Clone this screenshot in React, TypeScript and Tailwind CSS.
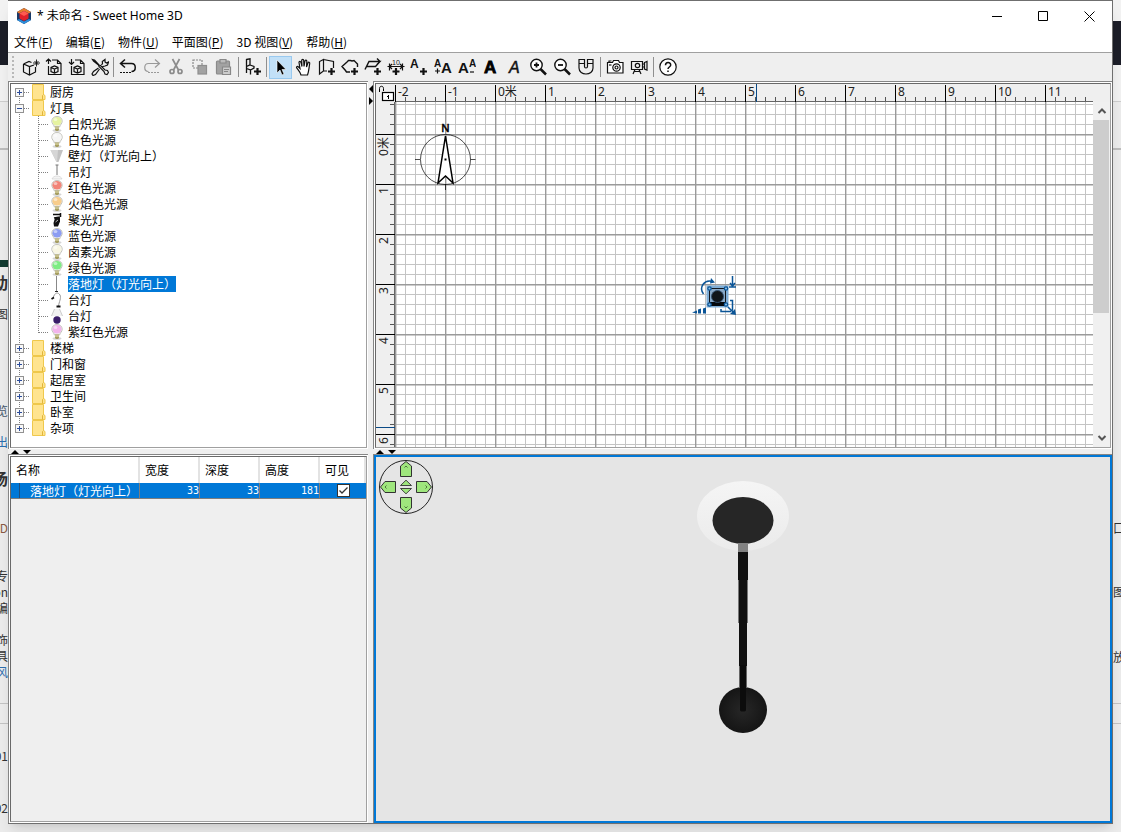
import { useState } from "react";
import type { ReactNode } from "react";
import clsx from "clsx";

const menus = [
  { label: "文件", mnemonic: "F" },
  { label: "编辑", mnemonic: "E" },
  { label: "物件", mnemonic: "U" },
  { label: "平面图", mnemonic: "P" },
  { label: "3D 视图", mnemonic: "V" },
  { label: "帮助", mnemonic: "H" },
];

const lights = [
  { name: "白炽光源", icon: <Bulb color="#e6f3a0" /> },
  { name: "白色光源", icon: <Bulb color="#f6f6f6" /> },
  { name: "壁灯（灯光向上）", icon: <WallLamp /> },
  { name: "吊灯", icon: <PendantLamp /> },
  { name: "红色光源", icon: <Bulb color="#f28478" /> },
  { name: "火焰色光源", icon: <Bulb color="#f8cd8c" /> },
  { name: "聚光灯", icon: <SpotLamp /> },
  { name: "蓝色光源", icon: <Bulb color="#8c9cf2" /> },
  { name: "卤素光源", icon: <Bulb color="#f8f6e2" /> },
  { name: "绿色光源", icon: <Bulb color="#7eec84" /> },
  { name: "落地灯（灯光向上）", icon: <FloorLamp /> },
  { name: "台灯", icon: <DeskLamp /> },
  { name: "台灯", icon: <TableLamp /> },
  { name: "紫红色光源", icon: <Bulb color="#f2b4ec" /> },
];

const categories = [
  { name: "厨房", children: [] },
  { name: "灯具", children: lights },
  { name: "楼梯", children: [] },
  { name: "门和窗", children: [] },
  { name: "起居室", children: [] },
  { name: "卫生间", children: [] },
  { name: "卧室", children: [] },
  { name: "杂项", children: [] },
];

function Bulb({ color }: { color: string }) {
  return (
    <svg viewBox="0 0 14 16" className="h-4 w-[14px]">
      <ellipse cx="7" cy="14.500" rx="4.500" ry="1.300" fill="#d4d4d4" />
      <path d="M7 .5C3.800.5 1.800 2.600 1.800 5.200c0 2.400 2 3.300 2.600 5.800h5.200c.6-2.500 2.600-3.400 2.600-5.800C12.200 2.600 10.200.5 7 .5z" fill="#f3f3f0" stroke="#b4b4ac" strokeWidth=".8" />
      <ellipse cx="7" cy="5.200" rx="4.600" ry="4.200" fill={color} />
      <ellipse cx="5.500" cy="3.500" rx="1.900" ry="1.500" fill="#fff" opacity=".5" />
      <path d="M5 10.500h4v3.500l-1 1H6l-1-1z" fill="#a59d60" />
      <path d="M5 12h4" stroke="#f2edc4" strokeWidth=".9" />
    </svg>
  );
}

function WallLamp() {
  return (
    <svg viewBox="0 0 14 16" className="h-4 w-[14px]">
      <path d="M.5 2h12.500L8.500 14h-2z" fill="#c2c2c2" />
      <path d="M.5 2H8l-1 12h-.5z" fill="#d6d6d6" />
    </svg>
  );
}

function PendantLamp() {
  return (
    <svg viewBox="0 0 14 16" className="h-4 w-[14px]">
      <path d="M5.500 1h3M7 1v10" stroke="#777" fill="none" />
      <path d="M2 15c1-4 9-4 10 0z" fill="#f4f4f4" stroke="#ccc" strokeWidth=".6" />
    </svg>
  );
}

function SpotLamp() {
  return (
    <svg viewBox="0 0 14 16" className="h-4 w-[14px]">
      <path d="M3 2.500h8M10.500 1v4M4 6l6-1" stroke="#111" strokeWidth="1.500" fill="none" />
      <path d="M5 6l5-.5v4L8 14.500H4L3.500 11z" fill="#111" />
      <path d="M5.500 10l2.500-2" stroke="#bbb" />
    </svg>
  );
}

function FloorLamp() {
  return (
    <svg viewBox="0 0 14 16" className="h-4 w-[14px]">
      <path d="M6.500 0v15" stroke="#888" />
      <path d="M5 15.500h3" stroke="#222" />
    </svg>
  );
}

function DeskLamp() {
  return (
    <svg viewBox="0 0 14 16" className="h-4 w-[14px]">
      <path d="M3 6C5 0 8 0 10 3c1.500 3-1 7-1.500 11" stroke="#999" fill="none" />
      <path d="M1.500 7l2.500-1.500M6.500 14.500h4" stroke="#111" strokeWidth="1.800" />
    </svg>
  );
}

function TableLamp() {
  return (
    <svg viewBox="0 0 14 16" className="h-4 w-[14px]">
      <path d="M4.500 1h5l3 7h-11z" fill="#f1f1f1" />
      <path d="M4.500 1l-3 7M9.500 1l3 7" stroke="#ccc" />
      <circle cx="7" cy="12" r="3.700" fill="#3a1d69" />
    </svg>
  );
}

function FolderIcon() {
  return (
    <svg viewBox="0 0 14 16" className="h-4 w-[14px]">
      <path d="M.5.5h11v10l1.500 1v4H.5z" fill="#ffe48f" stroke="#efc84c" />
      <path d="M10.500 15.500v-4l1-1" fill="none" stroke="#e0b53a" />
    </svg>
  );
}

// Guide lines drawn in front of a top level row, with the expand box
function BranchGuide({ open, first, last }: { open: boolean; first: boolean; last: boolean }) {
  return (
    <svg viewBox="0 0 21 16" className="h-4 w-[21px] shrink-0" shapeRendering="crispEdges">
      <path d={first ? "M8.500 8v8" : last ? "M8.500 0v8" : "M8.500 0v16"} stroke="#808080" strokeDasharray="1 1" />
      <path d="M13 8.500h5" stroke="#808080" strokeDasharray="1 1" />
      <rect x="4.500" y="4.500" width="8" height="8" fill="#f8f8f8" stroke="#919191" />
      <path d={open ? "M6 8.500h5" : "M6 8.500h5M8.500 6v5"} stroke="#2b4c9b" />
    </svg>
  );
}

function LeafGuide({ last }: { last: boolean }) {
  return (
    <svg viewBox="0 0 39 16" className="h-4 w-[39px] shrink-0" shapeRendering="crispEdges">
      <path d="M8.500 0v16" stroke="#808080" strokeDasharray="1 1" />
      <path d={last ? "M27.500 0v9" : "M27.500 0v16"} stroke="#808080" strokeDasharray="1 1" />
      <path d="M28 8.500h10" stroke="#808080" strokeDasharray="1 1" />
    </svg>
  );
}

function CatalogTree() {
  const [selected, setSelected] = useState(10);
  return (
    <ul className="flex-1 bg-white">
      {categories.map((category, index) => (
        <li key={category.name}>
          <div className="flex h-4 items-center">
            <BranchGuide
              open={category.children.length > 0}
              first={index === 0}
              last={index === categories.length - 1}
            />
            <FolderIcon />
            <span className="ml-1 leading-4">{category.name}</span>
          </div>
          {category.children.length > 0 && (
            <ul>
              {category.children.map((item, i) => (
                <li key={i} className="flex h-4 items-center">
                  <LeafGuide last={i === category.children.length - 1} />
                  {item.icon}
                  <button
                    type="button"
                    onClick={() => setSelected(i)}
                    className={clsx(
                      "ml-1 h-4 whitespace-nowrap leading-4",
                      selected === i && "bg-[#0078d7] text-white"
                    )}
                  >
                    {item.name}
                  </button>
                </li>
              ))}
            </ul>
          )}
        </li>
      ))}
    </ul>
  );
}

function FurnitureTable() {
  const [visible, setVisible] = useState(true);
  const head = "border-r-2 border-[#e3e3e3] pl-[5px] text-left font-normal";
  const cell = "border-r border-b border-[#7d7d7d] text-right font-[DejaVu_Sans_Mono,monospace] text-[10px]";
  return (
    <table className="w-full table-fixed border-separate border-spacing-0">
      <colgroup>
        <col className="w-[129px]" />
        <col className="w-[60px]" />
        <col className="w-[60px]" />
        <col className="w-[60px]" />
        <col />
      </colgroup>
      <thead>
        <tr className="h-[26px] bg-white">
          <th className={head}>名称</th>
          <th className={head}>宽度</th>
          <th className={head}>深度</th>
          <th className={head}>高度</th>
          <th className={head}>可见</th>
        </tr>
      </thead>
      <tbody>
        <tr className="h-4 bg-[#0078d7] leading-[15px] text-white">
          <td className="border-r border-b border-[#7d7d7d] p-0">
            <div className="ml-2 h-[15px] border-l border-[#1c4f80] pl-[10px] whitespace-nowrap">落地灯（灯光向上）</div>
          </td>
          <td className={cell}>33</td>
          <td className={cell}>33</td>
          <td className={cell}>181</td>
          <td className="border-b border-[#7d7d7d] p-0">
            <label className="relative mx-auto block size-[13px]">
              <input
                type="checkbox"
                aria-label="可见"
                checked={visible}
                onChange={() => setVisible(!visible)}
                className="block size-[13px] appearance-none border border-[#333] bg-white"
              />
              {visible && (
                <svg viewBox="0 0 13 13" className="pointer-events-none absolute inset-0">
                  <path d="M2.500 6.500l2.500 2.500 5.500-5.500" fill="none" stroke="#333" strokeWidth="1.300" />
                </svg>
              )}
            </label>
          </td>
        </tr>
      </tbody>
    </table>
  );
}

function Icon({ children }: { children: ReactNode }) {
  return (
    <svg viewBox="0 0 18 18" className="size-[18px]" fill="none" stroke="#111" strokeWidth="1.200">
      {children}
    </svg>
  );
}

const plus = <path d="M10 13.500h7M13.500 10v7" strokeWidth="2.200" />;
const letter = "Liberation Sans, Arial, sans-serif";

const tools: { width: "narrow" | "wide"; sep?: boolean; label: string; icon: ReactNode }[] = [
  {
    width: "narrow", label: "新建",
    icon: <><path d="M1.500 6l6 2.500L12 7M1.500 6v8l6 3 6-3V9M7.500 8.500V17M1.500 6L7 3.500l2.500 1" /><path d="M11 5h7M14.500 1.500v7M12.500 3l4 4M16.500 3l-4 4" strokeWidth=".9" /></>,
  },
  {
    width: "narrow", label: "打开",
    icon: <path d="M7 2h5.500L16 5.500v11H3.500V8M12.500 2v3.500H16M1 3.500L3.500 1 6 3.500M3.500 1v5M6 9.500L9.500 11 13 9.500M6 9.500v4L9.500 15l3.500-1.500v-4L9.500 8zM9.500 11v4" />,
  },
  {
    width: "narrow", label: "保存",
    icon: <path d="M7 2h5.500L16 5.500v11H3.500V8M12.500 2v3.500H16M1 4l2.500 2.500L6 4M3.500 1v5M6 9.500L9.500 11 13 9.500M6 9.500v4L9.500 15l3.500-1.500v-4L9.500 8zM9.500 11v4" />,
  },
  {
    width: "narrow", label: "偏好设置",
    icon: <path d="M1.500 1.500l2 .5 4.500 5 1.500.5 4.500 4.500 2.500.5 1 2-1.500 2-2-.5-1-2.500-5-5-.5-1.500-5-4zM10.500 7l1-1.500-.2-2L14 1.500v2.500l1.500 1 2-1-1 3-2.500 1-2 .5-1 .5M7.500 10L2.500 13.500 1 16l1 1.500 2.500-1L8.500 11" />,
  },
  {
    width: "wide", sep: true, label: "撤消",
    icon: <><path d="M6 1.500l-4.500 4L6 9.500M1.500 5.500h11c5 0 5 8 0 8" strokeWidth="1.500" /><path d="M1 14.500h12" strokeDasharray="2 1" /></>,
  },
  {
    width: "wide", label: "重做",
    icon: <g stroke="#999"><path d="M12 1.500l4.500 4-4.500 4M16.500 5.500h-11c-5 0-5 8 0 8" /><path d="M5 14.500h12" strokeDasharray="2 1" /></g>,
  },
  {
    width: "wide", label: "剪切",
    icon: <g stroke="#8c8c8c" strokeWidth="1.700"><path d="M5.500 1l6 11M12.500 1l-6 11" /><circle cx="5" cy="13.500" r="2" /><circle cx="13" cy="13.500" r="2" /></g>,
  },
  {
    width: "wide", label: "复制",
    icon: <><rect x="2" y="2" width="9" height="8" stroke="#888" strokeDasharray="2 1" /><rect x="7" y="7.500" width="8.500" height="8.500" fill="#a2a2a2" stroke="#8e8e8e" /></>,
  },
  {
    width: "wide", label: "粘贴",
    icon: <><rect x="1.500" y="3" width="13" height="13" rx="1" fill="#a2a2a2" stroke="#8a8a8a" /><path d="M5 1.500h6v3.500H5z" fill="#bbb" stroke="#888" /><path d="M7.500 9h8v7.500h-8zM9 11.500h5M9 13.500h4" fill="#ccc" stroke="#888" /></>,
  },
  {
    width: "narrow", sep: true, label: "添加家具",
    icon: <><path d="M2.500 1.500L6 .8v6L2.500 8.500zM2.500 8.500V15M2.500 10.500L6.500 12v4.500M6.500 12L10 10V8.500L6 7" strokeWidth="1.300" />{plus}</>,
  },
  {
    width: "narrow", sep: true, label: "选择",
    icon: <path d="M5 2v13l3-3 2 5 2-1-2-4.500h4z" fill="#000" stroke="#fff" strokeWidth=".6" />,
  },
  {
    width: "narrow", label: "平移",
    icon: <path d="M6 17C5 13.500 2.500 11.500 1.500 9.500c0-1 1-1.500 2-.5L5 10.500 4 4.500c0-1.500 1.500-1.500 2 0l1 4-.3-6c0-1.500 2-1.500 2 0l.3 6 1-5.500c.3-1.500 2-1 1.800.5L11.500 9l1.500-4c.5-1.300 2-.8 1.700.7C14 9 14 13 12.500 17z" fill="#fff" />,
  },
  {
    width: "narrow", label: "创建墙",
    icon: <><path d="M1.500 16V3.500l4-2V13zM5.500 1.500l10 2V10M5.500 13H9" />{plus}</>,
  },
  {
    width: "narrow", label: "创建房间",
    icon: <><path d="M9 14H5.500l-1-1.500L1 8.500 6 4l1.500-1.500h2L11 3l2-.5L16.500 6v3" strokeWidth="1.400" />{plus}</>,
  },
  {
    width: "narrow", label: "创建多段线",
    icon: <><path d="M1 11.500L5 3.500h11L11.500 8.500H2.500M13 .5l3 3-3 3" strokeWidth="1.400" />{plus}</>,
  },
  {
    width: "narrow", label: "创建尺寸",
    icon: <><path d="M2.500 5.500v7M15.500 5.500v7M.5 8.500h17M5 6L2.500 8.500 5 11M13 6l2.500 2.500L13 11" /><text x="5" y="6.500" fontSize="7" fontFamily={letter} fill="#111" stroke="none">10</text><path d="M5.500 13.500h7M9 10v7" strokeWidth="2.200" /></>,
  },
  {
    width: "wide", label: "添加文字",
    icon: <><text x="0" y="10" fontSize="12" fontWeight="bold" fontFamily={letter} fill="#111" stroke="none">A</text>{plus}</>,
  },
  {
    width: "wide", label: "增大字号",
    icon: <><text x="0" y="9" fontSize="10" fontWeight="bold" fontFamily={letter} fill="#111" stroke="none">A</text><text x="7" y="15" fontSize="15" fontWeight="bold" fontFamily={letter} fill="#111" stroke="none">A</text><path d="M1 13h5M3.500 10.500v5" /></>,
  },
  {
    width: "wide", label: "减小字号",
    icon: <><text x="0" y="15" fontSize="15" fontWeight="bold" fontFamily={letter} fill="#111" stroke="none">A</text><text x="11" y="9" fontSize="10" fontWeight="bold" fontFamily={letter} fill="#111" stroke="none">A</text><path d="M12 14h4" /></>,
  },
  {
    width: "wide", label: "粗体",
    icon: <text x="2" y="15" fontSize="17" fontWeight="bold" fontFamily={letter} fill="#000" stroke="#000" strokeWidth=".8">A</text>,
  },
  {
    width: "narrow", label: "斜体",
    icon: <text x="3" y="15" fontSize="16" fontStyle="italic" fontFamily={letter} fill="#111" stroke="#111" strokeWidth=".5">A</text>,
  },
  {
    width: "wide", label: "放大",
    icon: <><circle cx="7.500" cy="7" r="5.700" fill="#fff" strokeWidth="1.400" /><path d="M5 7h5M7.500 4.500v5" strokeWidth="1.800" /><path d="M11.500 11l5.500 5.500" strokeWidth="2.500" /></>,
  },
  {
    width: "wide", label: "缩小",
    icon: <><circle cx="7.500" cy="7" r="5.700" fill="#fff" strokeWidth="1.400" /><path d="M5 7h5" strokeWidth="1.800" /><path d="M11.500 11l5.500 5.500" strokeWidth="2.500" /></>,
  },
  {
    width: "wide", label: "磁性",
    icon: <path d="M2 1.500h5.500v7c0 2 3 2 3 0v-7H16v8.500c0 8-14 8-14 0zM2 5.500h5.500M10.500 5.500H16" />,
  },
  {
    width: "wide", sep: true, label: "拍照",
    icon: <><path d="M1.500 4.500h5l1-2h5l1 2h3.500v10.500H1.500zM3 4V3h2.500" fill="#fff" /><circle cx="10.500" cy="9.500" r="3.700" /><circle cx="10.500" cy="9.500" r="1.500" /><path d="M3 7h2.500" /></>,
  },
  {
    width: "wide", label: "录像",
    icon: <><path d="M1.500 3.500h11v8h-11zM12.500 6h2v3h-2M14.500 4.500L17 3.500v8.500l-2.500-1zM5 11.500L3 16M9 11.500l2 4.500M4 13.500h6" /><circle cx="7.500" cy="7.500" r="2.200" /></>,
  },
  {
    width: "wide", sep: true, label: "帮助",
    icon: <><circle cx="9" cy="9" r="8.200" fill="#fff" /><path d="M6.500 7.200c0-3.500 5.200-3.500 5.200-.2 0 2-2.700 2-2.700 4M9 12.500V14" strokeWidth="1.500" /></>,
  },
];

function Toolbar() {
  const [active, setActive] = useState("选择");
  return (
    <div role="toolbar" className="flex h-7 items-center bg-[#efefef] pl-[3px]">
      <svg viewBox="0 0 8 24" className="h-6 w-2" shapeRendering="crispEdges">
        <path d="M2 1v22" stroke="#b8b8b8" strokeWidth="2" strokeDasharray="2 2" />
      </svg>
      {tools.map((tool) => (
        <div key={tool.label} className="flex items-center">
          {tool.sep && <span className="mx-[2px] h-5 w-px bg-[#8f8f8f]" />}
          <button
            type="button"
            title={tool.label}
            aria-pressed={active === tool.label}
            onClick={() => setActive(tool.label)}
            className={clsx(
              "flex h-[23px] items-center justify-center",
              tool.width === "wide" ? "w-6" : "w-[23px]",
              active === tool.label && "border border-[#99c9ef] bg-[#c2e0f7]"
            )}
          >
            <Icon>{tool.icon}</Icon>
          </button>
        </div>
      ))}
    </div>
  );
}

const rulerX = Array.from({ length: 14 }, (_, i) => i - 2);
const rulerY = Array.from({ length: 7 }, (_, i) => i);

function HorizontalRuler() {
  return (
    <svg className="h-full w-full" shapeRendering="crispEdges">
      <defs>
        <pattern id="ticks-x" width="10" height="18" patternUnits="userSpaceOnUse">
          <rect y="13" width="1" height="5" fill="#555" />
        </pattern>
      </defs>
      <rect width="100%" height="18" fill="url(#ticks-x)" />
      <rect y="17" width="100%" height="1" fill="#666" />
      <rect x="361" width="1" height="18" fill="#0b4a86" />
      {rulerX.map((n, i) => (
        <g key={n}>
          <rect x={i * 50} y="1" width="1" height="17" fill="#000" />
          <text x={i * 50 + 3} y="12" fontSize="12" fill="#222">
            {n === 0 ? "0米" : n}
          </text>
        </g>
      ))}
    </svg>
  );
}

function VerticalRuler() {
  return (
    <svg className="h-full w-full" shapeRendering="crispEdges">
      <defs>
        <pattern id="ticks-y" y="2" width="19" height="10" patternUnits="userSpaceOnUse">
          <rect x="14" width="5" height="1" fill="#555" />
        </pattern>
      </defs>
      <rect width="19" height="100%" fill="url(#ticks-y)" />
      <rect x="18" width="1" height="100%" fill="#666" />
      <rect y="325" width="19" height="1" fill="#0b4a86" />
      {rulerY.map((n) => (
        <g key={n}>
          <rect y={n * 50 + 32} width="19" height="1" fill="#000" />
          <text transform={`translate(12 ${n * 50 + 35}) rotate(-90)`} textAnchor="end" fontSize="12" fill="#222">
            {n === 0 ? "0米" : n}
          </text>
        </g>
      ))}
    </svg>
  );
}

function PlanCanvas() {
  return (
    <svg className="h-full w-full bg-white">
      <defs>
        <pattern id="minor" y="2" width="10" height="10" patternUnits="userSpaceOnUse">
          <path d="M.5 0v10M0 .5h10" stroke="#c4c4c4" />
        </pattern>
        <pattern id="major" y="32" width="50" height="50" patternUnits="userSpaceOnUse">
          <path d="M.7 0v50M0 .7h50" stroke="#9a9a9a" strokeWidth="1.400" />
        </pattern>
      </defs>
      <rect width="100%" height="100%" fill="url(#minor)" />
      <rect width="100%" height="100%" fill="url(#major)" />

      {/* compass */}
      <g fill="none" stroke="#000">
        <circle cx="50.500" cy="57.500" r="25" strokeWidth=".7" />
        <path d="M20 57.500h5M75.500 57.500h5M50.500 82v6" strokeWidth=".7" />
        <path d="M50.500 34L43 81l7.500-7 7.500 7z" fill="#fff" strokeWidth="1.500" />
        <path d="M50.500 56.500v2" strokeWidth="2" />
      </g>
      <text x="50.500" y="30" textAnchor="middle" fontSize="11" stroke="#000" strokeWidth=".5">N</text>

      {/* selected floor lamp with its handles */}
      <rect x="314" y="186" width="17" height="17" fill="#a9c7e2" stroke="#7fadd6" strokeWidth="5" />
      <rect x="314.500" y="186.500" width="16" height="16" fill="#89a9c8" stroke="#12161c" />
      <rect x="315" y="200" width="15" height="4" fill="#05080c" />
      <circle cx="322.500" cy="194.500" r="6" fill="#10151a" stroke="#33506e" />
      <g fill="#8cc0e8" stroke="#0b5597" strokeWidth="1.300">
        <circle cx="314.500" cy="186.500" r="1.700" />
        <circle cx="331" cy="186.500" r="1.700" />
        <circle cx="314.500" cy="202.500" r="1.700" />
        <circle cx="331" cy="202.500" r="1.700" />
      </g>
      <g fill="none" stroke="#0b5597" strokeWidth="1.500">
        <path d="M308.500 192c-5-7 1-15 9-12.500" />
        <path d="M337.500 174v10M334 185h7M335 181l2.500 3 2.500-3" />
        <path d="M335 198.500h2.500v10M326 207v2.500h10M333 205l6 6" />
      </g>
      <path d="M316 176l4 4.500-5 1zM341 213l-6-1 5-5z" fill="#0b5597" />
      <path d="M297 210.500l5-2v3zM303 207.500l3-1v5h-3zM308 206.500l3-1v6h-3z" fill="#0b5597" />
    </svg>
  );
}

function ScrollBar() {
  return (
    <div className="flex h-full flex-col bg-[#f0f0f0]">
      <button type="button" aria-label="向上滚动" className="flex h-[18px] items-center justify-center">
        <svg viewBox="0 0 10 8" className="h-2 w-[10px]"><path d="M1.500 6L5 2.500 8.500 6" fill="none" stroke="#555" strokeWidth="2" /></svg>
      </button>
      <div className="mr-px h-[193px] bg-[#cdcdcd]" />
      <button type="button" aria-label="向下滚动" className="mt-auto flex h-[18px] items-center justify-center">
        <svg viewBox="0 0 10 8" className="h-2 w-[10px]"><path d="M1.500 2L5 5.500 8.500 2" fill="none" stroke="#555" strokeWidth="2" /></svg>
      </button>
    </div>
  );
}

function PlanView() {
  return (
    <div className="grid flex-1 grid-cols-[19px_minmax(0,1fr)_17px] grid-rows-[18px_minmax(0,1fr)] bg-[#efefef] font-[Noto_Sans,Noto_Sans_CJK_SC,sans-serif]">
      <svg viewBox="0 0 19 18" className="h-[18px] w-[19px]" fill="none" stroke="#000">
        <path d="M3.500 8V4.500c0-3 4-3 4 0V7" />
        <rect x="6.500" y="8.500" width="11" height="8" fill="#fff" strokeWidth="1.200" />
        <path d="M12.500 11v4M11 12.500h1.500" />
      </svg>
      <HorizontalRuler />
      <div />
      <VerticalRuler />
      <PlanCanvas />
      <ScrollBar />
    </div>
  );
}

function NavButton({ label, rotate }: { label: string; rotate: string }) {
  return (
    <button type="button" aria-label={label} className={clsx("flex size-[18px] items-center justify-center", rotate)}>
      <svg viewBox="0 0 18 18" className="size-[18px]" stroke="#333" fill="none">
        <path d="M3.500 16.500V6L9 1.500 14.500 6v10.500z" fill="#9fe67d" />
        <path d="M7.500 7.500L9 6l1.500 1.500" stroke="#4c7a3a" />
      </svg>
    </button>
  );
}

function View3D() {
  return (
    <div className="relative flex flex-1 justify-center bg-[#e5e5e5] pt-6">
      <div className="absolute top-[3px] left-[3px] grid size-[54px] grid-cols-3 rounded-full outline -outline-offset-1 outline-[#222]">
        <span />
        <NavButton label="前进" rotate="rotate-0" />
        <span />
        <NavButton label="左转" rotate="-rotate-90" />
        <button type="button" aria-label="升降">
          <svg viewBox="0 0 18 18" className="size-[18px]" fill="#9fe67d" stroke="#333" strokeWidth=".9">
            <path d="M3.500 7.500L9 2.200l5.500 5.300zM3.500 10.500h11L9 15.800z" />
          </svg>
        </button>
        <NavButton label="右转" rotate="rotate-90" />
        <span />
        <NavButton label="后退" rotate="rotate-180" />
        <span />
      </div>
      <svg viewBox="0 0 94 254" className="h-[254px] w-[94px]">
        <defs>
          <linearGradient id="bowl" x2="0" y2="1">
            <stop offset="0" stopColor="#f5f5f5" />
            <stop offset="1" stopColor="#ebebeb" />
          </linearGradient>
          <radialGradient id="base">
            <stop offset="0" stopColor="#272727" />
            <stop offset="1" stopColor="#151515" />
          </radialGradient>
        </defs>
        <ellipse cx="47" cy="35" rx="46" ry="35" fill="url(#bowl)" />
        <ellipse cx="47" cy="39.500" rx="30.500" ry="23.500" fill="#262626" />
        <rect x="42" y="62" width="10" height="9" fill="#828282" />
        <ellipse cx="47" cy="229" rx="24" ry="23" fill="url(#base)" />
        <path d="M42 71h10v28h-10z" fill="#111" />
        <path d="M42 99h10v43h-10z" fill="#777" />
        <path d="M43 184h8v22h-8z" fill="#666" />
        <path d="M43 99h8v86h-8z" fill="#101010" />
        <path d="M44 184h6v45c0 2-6 2-6 0z" fill="#0c0c0c" />
      </svg>
    </div>
  );
}

// Sunken frame used by the panes on both sides of the splitters
function Pane({ focused, className, children }: { focused?: boolean; className?: string; children: ReactNode }) {
  return (
    <section className={clsx("flex flex-col border-t border-l border-[#858585]", className)}>
      {focused ? (
        <div className="flex flex-1 flex-col border-2 border-[#0078d7]">{children}</div>
      ) : (
        <div className="flex flex-1 flex-col border border-white bg-[#efefef]">
          <div className="flex flex-1 flex-col border border-t-[#696969] border-r-[#a0a0a0] border-b-[#a0a0a0] border-l-[#696969]">
            {children}
          </div>
        </div>
      )}
    </section>
  );
}

function Splitter() {
  return (
    <div className="h-[5px] shrink-0 bg-[#efefef] pl-[3px]">
      <svg viewBox="0 0 20 5" className="h-[5px] w-5">
        <path d="M0 5l4-4 4 4zM12 1h8l-4 4z" fill="#000" />
      </svg>
    </div>
  );
}

function AppLogo() {
  return (
    <svg viewBox="0 0 16 16" className="size-4">
      <path d="M8 0l7 4v8l-7 4-7-4V4z" fill="#173a68" />
      <path d="M8 0l7 4-2 1.500L8 3 3 5.500 1 4z" fill="#e77b2d" />
      <path d="M1 12l7 4 7-4-2-1-5 2.500L3 11z" fill="#2f8fdc" />
      <path d="M8 3l4.500 2.500v5L8 13l-4.500-2.500v-5z" fill="#e0202a" />
      <path d="M8 3l4.500 2.500L8 8 3.500 5.500z" fill="#ff5a50" />
    </svg>
  );
}

function Caption() {
  const button = "flex w-[46px] items-center justify-center";
  return (
    <header className="flex h-[30px] bg-white pl-2">
      <div className="flex items-center gap-[5px]">
        <AppLogo />
        <h1 className="font-[Noto_Sans,Noto_Sans_CJK_SC,sans-serif]">* 未命名 - Sweet Home 3D</h1>
      </div>
      <div className="ml-auto flex">
        <button type="button" aria-label="最小化" className={button}>
          <svg viewBox="0 0 11 11" className="size-[11px]"><path d="M0 5.500h10" stroke="#000" /></svg>
        </button>
        <button type="button" aria-label="最大化" className={button}>
          <svg viewBox="0 0 11 11" className="size-[11px]"><path d="M.5.5h9v9h-9z" fill="none" stroke="#000" /></svg>
        </button>
        <button type="button" aria-label="关闭" className={button}>
          <svg viewBox="0 0 11 11" className="size-[11px]"><path d="M.5.5l10 10M10.500.5l-10 10" stroke="#000" /></svg>
        </button>
      </div>
    </header>
  );
}

const leftScraps = [
  { text: "动", place: "top-[270px] text-base font-bold" },
  { text: "图", place: "top-[302px]" },
  { text: "览", place: "top-[399px] text-[#46586c]" },
  { text: "出", place: "top-[430px] text-[#2c6fb0]" },
  { text: "场", place: "top-[466px] text-base font-bold" },
  { text: "3D", place: "top-[516px] text-[#8a5a44]" },
  { text: "专", place: "top-[564px]" },
  { text: "on", place: "top-[580px]" },
  { text: "编", place: "top-[596px]" },
  { text: "饰", place: "top-[628px]" },
  { text: "具", place: "top-[644px]" },
  { text: "风", place: "top-[660px] text-[#2c6fb0]" },
  { text: "01", place: "top-[744px]" },
  { text: "02", place: "top-[796px]" },
];

const rightScraps = [
  { text: "口-", place: "top-[516px]" },
  { text: "图", place: "top-[580px]" },
  { text: "放", place: "top-[645px]" },
];

// The page that shows around the window
function Backdrop() {
  return (
    <div aria-hidden="true" className="absolute inset-0 overflow-hidden bg-[#ececec] text-[#333]">
      <div className="h-[21px] bg-[#f2f2f2]" />
      <div className="h-11 bg-[#1c1e28]" />
      <div className="h-[37px] border-b border-[#cecece] bg-[#f2f2f2]" />
      <div className="h-12 border-b-2 border-[#bdbdbd] bg-[#ececec]" />
      <div className="absolute top-[703px] h-[21px] w-full border-y border-[#c4c4c4]" />
      <div className="absolute top-[260px] left-0 h-[7px] w-2 bg-[#123a30]" />
      <div className="absolute inset-y-0 left-0 w-2 overflow-hidden">
        {leftScraps.map((scrap) => (
          <span key={scrap.text} className={clsx("absolute right-0 leading-6 whitespace-nowrap", scrap.place)}>
            {scrap.text}
          </span>
        ))}
      </div>
      <div className="absolute inset-y-0 right-0 w-2 overflow-hidden">
        {rightScraps.map((scrap) => (
          <span key={scrap.text} className={clsx("absolute left-0 leading-6 whitespace-nowrap", scrap.place)}>
            {scrap.text}
          </span>
        ))}
      </div>
    </div>
  );
}

export default function App() {
  return (
    <div className="relative flex min-h-screen flex-col px-2 pb-2 font-[Noto_Sans_CJK_SC,sans-serif] text-xs text-black">
      <Backdrop />
      <main className="relative flex flex-1 flex-col border-t border-r border-b border-[#6f6f6f] bg-[#efefef] shadow-lg">
        <Caption />
        <nav className="flex h-[22px] items-center gap-[13px] border-b border-[#a0a0a0] bg-white pl-[6px]">
          {menus.map((menu) => (
            <button key={menu.label} type="button" className="whitespace-nowrap">
              {menu.label}(<span className="underline">{menu.mnemonic}</span>)
            </button>
          ))}
        </nav>
        <Toolbar />
        <div className="flex flex-1">
          <div className="flex w-[360px] shrink-0 flex-col">
            <Pane className="h-[368px]">
              <CatalogTree />
            </Pane>
            <Splitter />
            <Pane className="flex-1">
              <FurnitureTable />
            </Pane>
          </div>
          <div className="w-[5px] shrink-0 bg-[#efefef] pt-1">
            <svg viewBox="0 0 5 20" className="h-5 w-[5px]">
              <path d="M5 0v8L1 4zM1 12l4 4-4 4z" fill="#000" />
            </svg>
          </div>
          <div className="flex min-w-0 flex-1 flex-col">
            <Pane className="h-[368px]">
              <PlanView />
            </Pane>
            <Splitter />
            <Pane focused className="flex-1">
              <View3D />
            </Pane>
          </div>
        </div>
      </main>
    </div>
  );
}
